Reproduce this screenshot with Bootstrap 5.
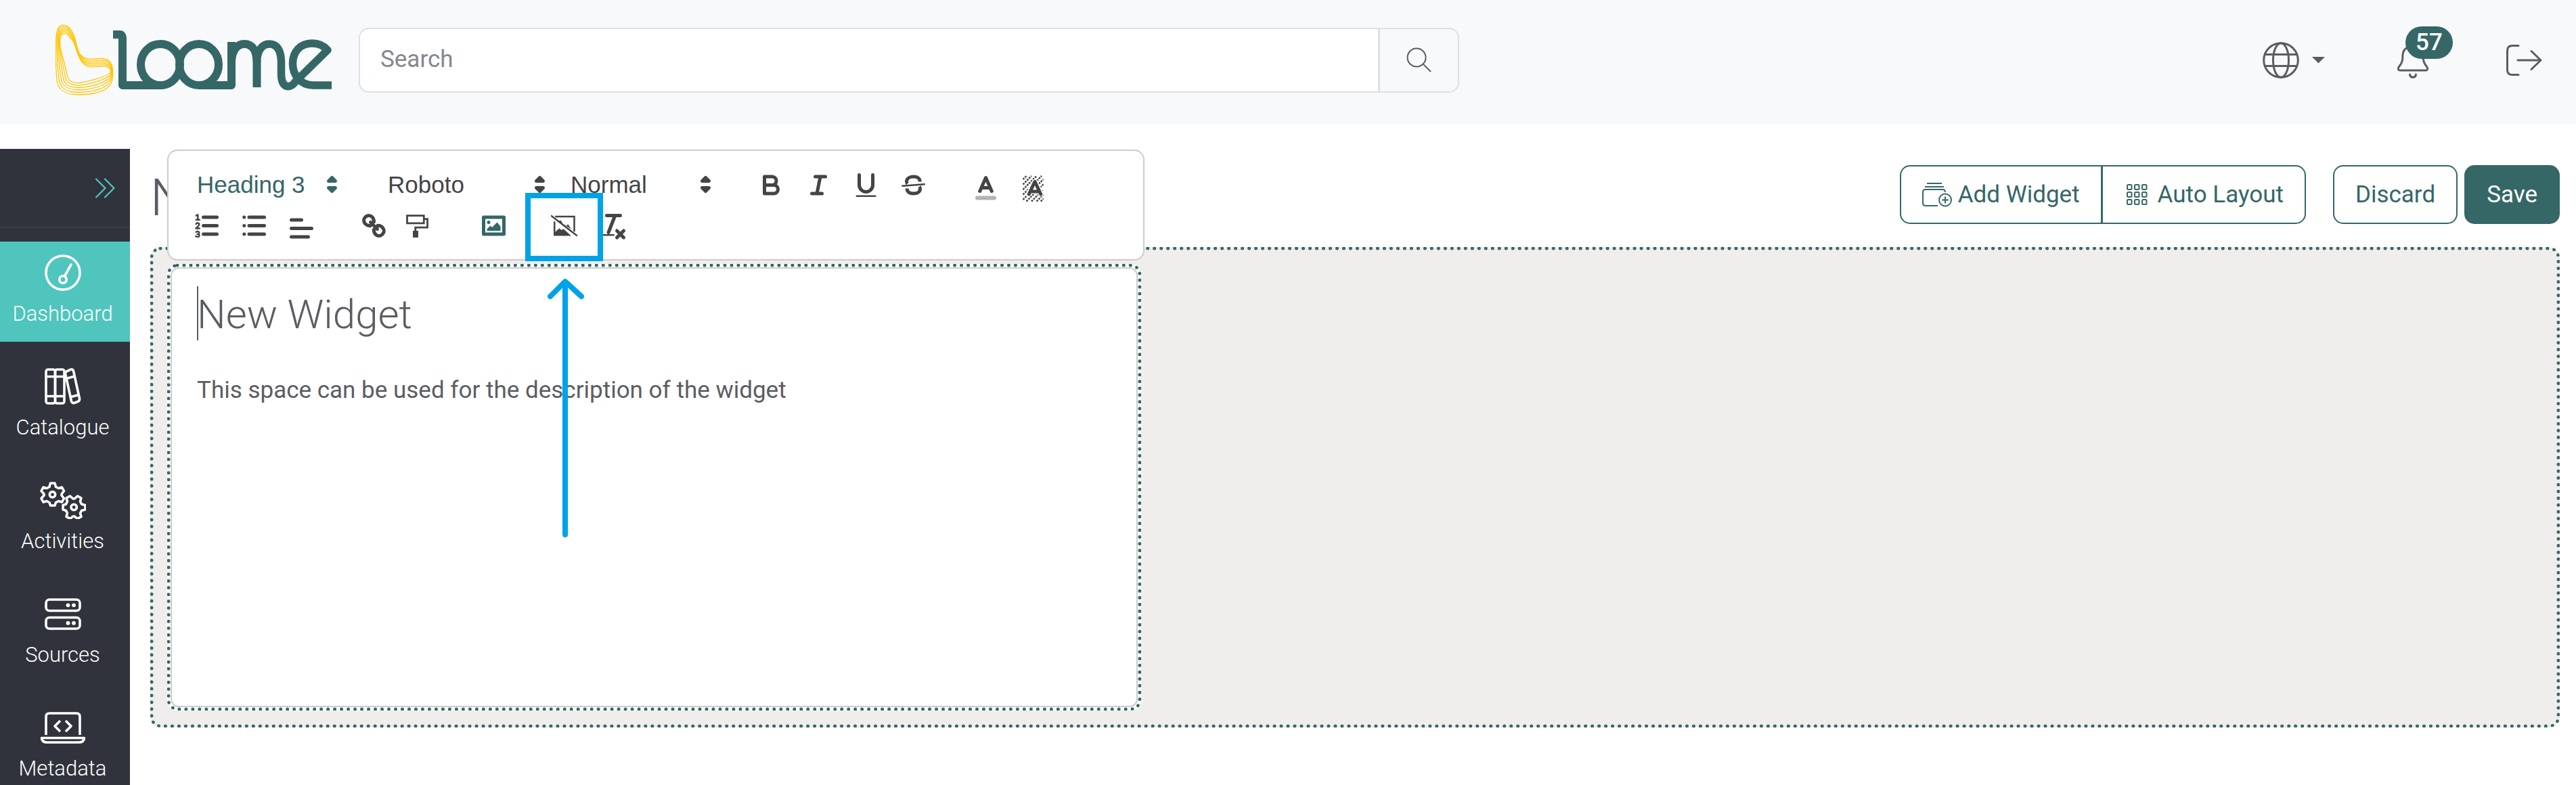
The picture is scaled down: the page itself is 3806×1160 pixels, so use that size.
<!DOCTYPE html>
<html lang="en">
<head>
<meta charset="utf-8">
<meta name="viewport" content="width=device-width, initial-scale=1">
<title>Loome</title>
<link href="https://cdn.jsdelivr.net/npm/bootstrap@5.3.0/dist/css/bootstrap.min.css" rel="stylesheet">
<style>
:root { --teal:#356767; --mint:#50c5bd; --ink:#5b5d63; --tool:#444; --line:#dee0e6; --edge:#ccc; }
body { font-family:Roboto,"Liberation Sans",sans-serif; font-size:35px; line-height:40px; color:var(--ink); background:#fff; }
svg { display:block; flex:none; }
.topbar { min-height:183px; background:#f8f9fb; padding:0 50px 6px 82px; margin-bottom:37px; }
.brand { margin-right:40px; }
.searchbox { width:44.25%; height:96px; }
.searchbox .form-control, .searchbox .btn { border:2px solid var(--line); border-radius:15px; font-size:35px; }
.searchbox .form-control { padding:0 30px; color:var(--ink); }
.searchbox .form-control::placeholder { color:#85878c; }
.searchbox .btn { width:119px; padding:0; display:flex; align-items:center; justify-content:center; background:#f8f9fb; color:var(--ink); }
.topbtn { border:0; background:none; padding:0; color:var(--ink); display:flex; align-items:center; position:relative; }
.topicons { gap:106px; }
.topicons .topbtn:last-child { margin-left:8px; }
.count { position:absolute; left:12px; top:-23px; width:70px; height:48px; border-radius:24px; background:var(--teal); color:#fff; font-size:35px; line-height:48px; font-weight:500; text-align:center; }
.side { width:192px; background:#30333c; overflow:hidden; }
.fold { height:117px; border:0; border-bottom:2px solid #3b3e48; background:none; padding:0 22px 0 0; display:flex; align-items:center; justify-content:flex-end; color:var(--mint); }
.side .nav { gap:20px; margin-top:20px; }
.side .nav-link { height:148px; padding:18px 7px 0 0; border-radius:0; color:#fff; font-size:31px; font-weight:300; text-align:center; flex:none; }
.side .nav-link.active { background:var(--mint); }
.side .nav-link svg { margin:0 auto 15px; }
.side .nav-link span { display:block; line-height:36px; }
.stage { padding:24px 24px 85px 30px; min-width:0; }
.headrow { height:87px; margin-bottom:34px; gap:10px; }
.headrow h1 { font-size:76px; line-height:96px; font-weight:300; margin:0; }
.act { --bs-btn-color:var(--teal); --bs-btn-border-color:var(--teal); --bs-btn-hover-bg:#e8f0f0; --bs-btn-hover-color:var(--teal); height:87px; border:2px solid var(--teal); border-radius:15px; font-size:35px; line-height:40px; padding:0 31px; display:flex; align-items:center; }
.act.solid { background:var(--teal); color:#fff; }
.btn-group { margin-right:30px; }
.btn-group .act + .act { margin-left:-2px; }
.board { border:5px dotted var(--teal); border-radius:15px; background:#efeeec; padding:20px; height:710px; }
.widget { position:relative; width:41%; height:660px; border:5px dotted var(--teal); border-radius:15px; background:#fff; }
.editor { height:100%; border:2px solid var(--edge); border-radius:12px; padding:30px 37px; position:relative; }
.editor h3 { font-size:60px; line-height:76px; font-weight:300; margin:0 0 54px; }
.editor h3::before { content:""; position:absolute; left:37px; top:26px; width:2px; height:80px; background:var(--ink); }
.editor p { margin:0; }
.tools { position:absolute; z-index:3; left:-5px; right:-10px; bottom:calc(100% + 10px); background:#fff; border:2px solid var(--edge); border-radius:15px; padding:20px 22px; color:var(--tool); }
.tools .line { display:flex; gap:37px; }
.tools .set { display:flex; }
.tool { width:70px; height:60px; border:0; background:none; color:inherit; padding:7px 12px; position:relative; }
.tool.drop { padding:12px; }
.tool.on { color:var(--teal); }
.pick { position:relative; width:245px; height:60px; }
.pick.wide { width:270px; }
.pick.on { color:var(--teal); }
.pick select { appearance:none; border:0; background:none; color:inherit; width:100%; height:60px; padding:0 20px; font-family:"Liberation Sans",Arial,sans-serif; font-size:35px; }
.pick svg { position:absolute; right:3px; top:7px; pointer-events:none; }
.q { width:45px; height:45px; fill:none; stroke:currentColor; stroke-width:2; stroke-linecap:round; stroke-linejoin:round; }
.q .f { fill:currentColor; stroke:none; }
.q .t { stroke-width:1; }
.callout { position:absolute; z-index:4; inset:-18px -19px -23px -26px; border:8px solid #00a2e8; pointer-events:none; }
.callout svg { position:absolute; left:25px; top:119px; }
</style>
<script src="https://cdn.jsdelivr.net/npm/bootstrap@5.3.0/dist/js/bootstrap.bundle.min.js"></script>
</head>
<body class="vh-100 overflow-hidden d-flex flex-column">

<header class="topbar d-flex align-items-center">
  <a class="brand" href="#" aria-label="Loome">
    <svg width="408" height="106" viewBox="82 35 408 106" fill="none">
      <g id="chair" stroke="#ffc70a" stroke-width="1.300"></g>
      <g stroke="#356767" stroke-width="12" stroke-linejoin="round">
        <path d="M167 50H177Q181 50 181 56V125H237M294 125H342V61M181 125H240"/>
        <ellipse cx="237" cy="94.500" rx="29" ry="30.500"/>
        <ellipse cx="294" cy="94.500" rx="29" ry="30.500"/>
        <path d="M342 92C342 74 350 64 361 64C373 64 379.500 74 379.500 92V128"/>
        <path d="M379.500 92C379.500 74 387 64 398 64C410 64 415.500 74 415.500 92V108C415.500 132 431 129 436 120L484 73C478 66 470 63 461 63C443 63 432.500 76 432.500 93C432.500 110 444 125 463 125H490" stroke-width="11.500"/>
      </g>
    </svg>
  </a>
  <form class="input-group searchbox" role="search">
    <input class="form-control" type="text" placeholder="Search" aria-label="Search">
    <button class="btn" type="button" aria-label="Run search">
      <svg width="37" height="37" viewBox="0 0 37 37" fill="none" stroke="currentColor" stroke-width="2"><circle cx="15" cy="15" r="13.500"/><path d="M25 25L36 36"/></svg>
    </button>
  </form>
  <div class="topicons d-flex align-items-center ms-auto">
    <button class="topbtn" type="button" aria-label="Language">
      <svg width="93" height="54" viewBox="0 0 93 54" fill="none" stroke="currentColor" stroke-width="3"><circle cx="27" cy="27" r="25.300"/><ellipse cx="27" cy="27" rx="11.500" ry="25.300"/><path d="M4 18.500H50M4 35.500H50"/><path d="M73 22H92L82.500 31.500Z" fill="currentColor" stroke="none"/></svg>
    </button>
    <button class="topbtn" type="button" aria-label="Notifications">
      <svg width="46" height="54" viewBox="0 0 46 54" fill="none" stroke="currentColor" stroke-width="3" stroke-linecap="round" stroke-linejoin="round"><path d="M23 2V6M23 6C13 6 8 13 8 20C8 29 6 32 2.500 36.500C0 40 2 42 4 42H42C44 42 46 40 43.500 36.500C40 32 38 29 38 20C38 13 33 6 23 6ZM18.500 48C19 53.500 27 53.500 27.500 48"/></svg>
      <span class="count">57</span>
    </button>
    <button class="topbtn" type="button" aria-label="Sign out">
      <svg width="54" height="48" viewBox="0 0 54 48" fill="none" stroke="currentColor" stroke-width="3" stroke-linecap="round" stroke-linejoin="round"><path d="M19 2.500H10Q2.500 2.500 2.500 10V38Q2.500 45.500 10 45.500H19M18 24H52M38 10.500L52 24L38 37.500"/></svg>
    </button>
  </div>
</header>

<div class="d-flex flex-grow-1 overflow-hidden">
  <aside class="side flex-shrink-0 d-flex flex-column">
    <button class="fold flex-shrink-0" type="button" aria-label="Expand menu">
      <svg width="30" height="30" viewBox="0 0 30 30" fill="none" stroke="currentColor" stroke-width="2.200" stroke-linecap="round" stroke-linejoin="round"><path d="M2 1.500L15.500 15L2 28.500M15 1.500L28.500 15L15 28.500"/></svg>
    </button>
    <nav class="nav flex-column flex-nowrap" aria-label="Main">
      <a class="nav-link active" href="#">
        <svg width="68" height="56" viewBox="0 0 68 56" fill="none" stroke="currentColor" stroke-width="3.600" stroke-linecap="round"><circle cx="34" cy="28" r="25"/><circle cx="34" cy="38" r="5.300"/><path d="M36.500 33L46 16"/></svg>
        <span>Dashboard</span></a>
      <a class="nav-link" href="#">
        <svg width="68" height="56" viewBox="0 0 68 56" fill="none" stroke="currentColor" stroke-width="3.600" stroke-linejoin="round"><rect x="9" y="3" width="13.500" height="50" rx="3"/><rect x="22.500" y="3" width="13.500" height="50" rx="3"/><path d="M9 13.500H36M9 42.500H36M40 5.500L45.500 3Q48.500 2 49.500 5L58.500 46Q59 49 56 50.500L50.500 52.500Q47.500 53 46.500 50L37.500 9Q37 6.500 40 5.500ZM39 16.500L51 13M46 43.500L57 40.500"/></svg>
        <span>Catalogue</span></a>
      <a class="nav-link" href="#">
        <svg width="68" height="56" viewBox="0 0 68 56" fill="none" stroke="currentColor" stroke-width="3.600" stroke-linejoin="round">
          <g id="gear"><path d="M14 3H20.500L22 8.500L26 10.500L31 9L34 14.500L30.500 19L30.500 21L34 25.500L31 31L26 29.500L22 31.500L20.500 36H14L12.500 31.500L8.500 29.500L3.500 31L0.500 25.500L4.500 21V19L0.500 14.500L3.500 9L8.500 10.500L12.500 8.500Z" transform="translate(1.500 0)"/><circle cx="18.500" cy="19.800" r="4.200"/></g>
          <use href="#gear" transform="translate(50.500 38.500) rotate(90) translate(-18.500 -19.500)"/>
        </svg>
        <span>Activities</span></a>
      <a class="nav-link" href="#">
        <svg width="68" height="56" viewBox="0 0 68 56" fill="none" stroke="currentColor" stroke-width="3.600"><rect x="9" y="7" width="50" height="16.500" rx="5"/><rect x="9" y="33.500" width="50" height="16.500" rx="5"/><g fill="currentColor" stroke="none"><circle cx="41.500" cy="15.300" r="2.900"/><circle cx="50" cy="15.300" r="2.900"/><circle cx="41.500" cy="41.700" r="2.900"/><circle cx="50" cy="41.700" r="2.900"/></g></svg>
        <span>Sources</span></a>
      <a class="nav-link" href="#">
        <svg width="68" height="56" viewBox="0 0 68 56" fill="none" stroke="currentColor" stroke-width="3.600" stroke-linejoin="round"><path d="M9 39V12Q9 7 14 7H54Q59 7 59 12V39M2.500 43.500H65.500Q65 50 57.500 50H10.500Q3 50 2.500 43.500Z"/><path d="M30 18L22 26L30 34M38 18L46 26L38 34"/></svg>
        <span>Metadata</span></a>
    </nav>
  </aside>

  <main class="stage flex-grow-1">
    <div class="headrow d-flex align-items-start">
      <h1 class="me-auto">N</h1>
      <div class="btn-group">
        <button class="btn act" type="button">
          <svg class="me-2" width="45" height="38" viewBox="0 0 45 38" fill="none" stroke="currentColor" stroke-width="2"><path d="M7 2H29M4 7H32M23 35H5Q1 35 1 31V15Q1 11 5 11H30Q34 11 34 15"/><circle cx="34" cy="26.500" r="9"/><path d="M34 21.500V31.500M29 26.500H39"/></svg>Add Widget</button>
        <button class="btn act ps-4" type="button">
          <svg class="ms-2" width="49" height="32" viewBox="-3 0 49 32" fill="none" stroke="currentColor" stroke-width="2"><g id="trio"><rect x="1" y="1" width="6.500" height="7" rx="1.500"/><rect x="12" y="1" width="6.500" height="7" rx="1.500"/><rect x="23" y="1" width="6.500" height="7" rx="1.500"/></g><use href="#trio" y="11"/><use href="#trio" y="22"/></svg>Auto Layout</button>
      </div>
      <button class="btn act" type="button">Discard</button>
      <button class="btn act solid" type="button">Save</button>
    </div>

    <section class="board">
      <article class="widget">
        <div class="tools" role="toolbar" aria-label="Formatting">
          <div class="line">
            <div class="pick on"><select aria-label="Heading level"><option>Heading 3</option></select><svg class="q" viewBox="0 0 18 18"><g fill="currentColor"><path d="M7 11L9 13L11 11ZM7 7L9 5L11 7Z"/></g></svg></div>
            <div class="set">
              <div class="pick wide"><select aria-label="Font"><option>Roboto</option></select><svg class="q" viewBox="0 0 18 18"><g fill="currentColor"><path d="M7 11L9 13L11 11ZM7 7L9 5L11 7Z"/></g></svg></div>
              <div class="pick"><select aria-label="Size"><option>Normal</option></select><svg class="q" viewBox="0 0 18 18"><g fill="currentColor"><path d="M7 11L9 13L11 11ZM7 7L9 5L11 7Z"/></g></svg></div>
            </div>
            <div class="set">
              <button class="tool" type="button" aria-label="Bold"><svg class="q" viewBox="0 0 18 18"><path d="M5,4H9.500A2.500,2.500,0,0,1,12,6.500v0A2.500,2.500,0,0,1,9.500,9H5A0,0,0,0,1,5,9V4A0,0,0,0,1,5,4ZM5,9h5.500A2.500,2.500,0,0,1,13,11.500v0A2.500,2.500,0,0,1,10.500,14H5Z"/></svg></button>
              <button class="tool" type="button" aria-label="Italic"><svg class="q" viewBox="0 0 18 18"><path d="M7 4H13M5 14H11M8 14L10 4"/></svg></button>
              <button class="tool" type="button" aria-label="Underline"><svg class="q" viewBox="0 0 18 18"><path d="M5,3V9a4.012,4.012,0,0,0,4,4H9a4.012,4.012,0,0,0,4-4V3"/><rect class="f" x="3" y="15" width="12" height="1" rx=".5"/></svg></button>
              <button class="tool" type="button" aria-label="Strike"><svg class="q" viewBox="0 0 18 18"><path class="t" d="M2.500 9.500L15.500 8.500"/><path stroke-linecap="butt" d="M12.900 7C12.900 5 11.400 4 9.100 4C6.500 4 5 5.300 5 7C5 7.500 5.200 7.900 5.500 8.200M5.100 11C5.300 13 6.800 14 9.100 14C11.600 14 13 12.800 13 11.200C13 10.700 12.900 10.300 12.600 9.900"/></svg></button>
            </div>
            <div class="set">
              <button class="tool drop" type="button" aria-label="Text colour"><svg class="q" viewBox="0 0 18 18"><path stroke="#b3b3b3" d="M4 15H14" stroke-width="2.400"/><path d="M5.500 11L9 3L12.500 11M11.600 9H6.400"/></svg></button>
              <button class="tool drop" type="button" aria-label="Background colour"><svg class="q" viewBox="0 0 18 18"><path class="t" stroke-linecap="butt" stroke-dasharray="1.100 .55" d="M3 4L5 2M3 7L8 2M3 10L11 2M3 13L14 2M3 16L15 4M5 17L15 7M8 17L15 10M11 17L15 13M13.500 17L15 15.500"/><path d="M6.500 12.500L10 5.500L13.500 12.500M12.500 11H7.500" stroke="#fff" stroke-width="3.400"/><path d="M6.500 12.800L10 5.300L13.500 12.800M12.400 11.200H7.600"/></svg></button>
            </div>
          </div>
          <div class="line">
            <div class="set">
              <button class="tool" type="button" aria-label="Numbered list"><svg class="q" viewBox="0 0 18 18"><path d="M7 4H15M7 9H15M7 14H15"/><path class="t" d="M2.700 3L3.700 2.500V5.500M2.700 5.500H4.700M2.700 8C2.900 7.100 4.600 7.300 4.500 8.300C4.400 9.200 3.300 9.700 2.600 10.600H4.700M2.700 12.700C4 12.100 4.800 12.700 4.400 13.600C4.200 14.100 3.400 14 3.400 14C4.600 14 4.900 14.800 4.400 15.300C4 15.700 3 15.600 2.500 15.200"/></svg></button>
              <button class="tool" type="button" aria-label="Bulleted list"><svg class="q" viewBox="0 0 18 18"><path d="M6 4H15M6 9H15M6 14H15"/><path d="M3.100 4H3.110M3.100 9H3.110M3.100 14H3.110"/></svg></button>
              <button class="tool drop" type="button" aria-label="Align"><svg class="q" viewBox="0 0 18 18"><path d="M3 4H9M3 9H15M3 14H13"/></svg></button>
            </div>
            <div class="set">
              <button class="tool" type="button" aria-label="Link"><svg class="q" viewBox="0 0 18 18"><path d="M7 7L11 11M8.900 11.300C8.900 12.600 9 13.300 10.100 14.300C11.500 15.400 13 15.100 14 14.100C15.100 13.100 15.300 11.500 14.200 10.200C13.300 9.100 12.500 8.900 11.200 8.900M9 6.700C9 5.400 8.900 4.700 7.900 3.800C6.600 2.700 5 2.800 3.900 3.900C2.800 4.900 2.700 6.500 3.800 7.800C4.700 8.900 5.500 9.100 6.800 9.100"/></svg></button>
              <button class="tool" type="button" aria-label="Format painter"><svg class="q" viewBox="0 0 18 18"><path stroke-width="1.100" stroke-linejoin="miter" stroke-linecap="butt" d="M.6 3H10.500V7.500H.6ZM10.800 5H12.600V10H5.500V13"/><rect class="f" x="4" y="12" width="3.200" height="4"/></svg></button>
            </div>
            <div class="set">
              <button class="tool on" type="button" aria-label="Image"><svg class="q" viewBox="0 0 18 18"><rect x="3" y="4" width="12" height="10"/><circle class="f" cx="6" cy="7" r="1"/><path class="f" d="M5 12V11L7 9L8 10L11 7L13 9.500V12Z"/></svg></button>
            </div>
            <div class="set">
              <button class="tool" type="button" aria-label="Remove image"><svg class="q" viewBox="0 0 18 18"><path class="t" stroke-linecap="butt" stroke-linejoin="miter" d="M0 3L15.500 15M2.500 3.600H13.800V12.500M2.100 6.500V14"/><path class="f" d="M1.600 15V13.500L5 10.500L6 11.500L7.500 11L12 15ZM4 6L6 6L7 8L9.500 9L10 8L12 11Z"/></svg><span class="callout"><svg width="54" height="384" viewBox="0 0 54 384" fill="none" stroke="#00a2e8" stroke-width="8" stroke-linecap="round" stroke-linejoin="round"><path d="M26 6V378M4 26L26 4L50 26"/></svg></span></button>
              <button class="tool" type="button" aria-label="Clear formatting"><svg class="q" viewBox="0 0 18 18"><path d="M5 3H13M6 13L9.500 4M11 12L15 16M15 12L11 16"/><rect class="f" x="2" y="14" width="7.500" height="1" rx=".5"/></svg></button>
            </div>
          </div>
        </div>
        <div class="editor">
          <h3>New Widget</h3>
          <p>This space can be used for the description of the widget</p>
        </div>
      </article>
    </section>
  </main>
</div>

<script>
// The chair is a stack of contours blended from its outer edge to its inner one.
const outer = [93,36, 84,36,82,50,82.5,72, 82,90,83,105,84,117, 85,133,97,139,118,139, 150,138,166,130,166.5,112, 168,92,162,85.5,150,85.5, 138,85,127,90,118,79, 112,70,113,52,104,42, 101,38,97,36,93,36];
const inner = [94,48.5, 88,49,87,62,91,77, 94,88,97,100,99,109, 101,119,107,122,117,121.500, 135,119,160,111,163,106, 166,101,158,96,150,97, 132,98,124,102,115,79, 111,68,110,60,103,54, 100,49,97,48,94,48.5];
const steps = 6;
for (let i = 0; i < steps; i++) {
  const p = outer.map((v, k) => (v + (inner[k] - v) * i / (steps - 1)).toFixed(1));
  const path = document.createElementNS('http://www.w3.org/2000/svg', 'path');
  path.setAttribute('d', `M${p[0]} ${p[1]}C${p.slice(2).join(' ')}Z`);
  document.getElementById('chair').append(path);
}
</script>
</body>
</html>
